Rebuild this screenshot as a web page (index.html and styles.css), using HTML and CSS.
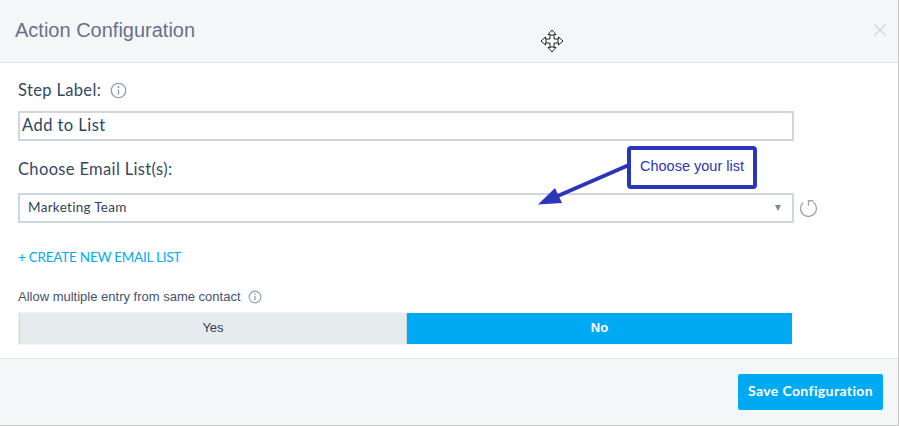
FILE: index.html
```html
<!DOCTYPE html>
<html lang="en">
<head>
<meta charset="utf-8">
<title>Action Configuration</title>
<link rel="stylesheet" href="styles.css">
</head>
<body>
<div class="modal">
  <header class="head">
    <h1 class="title">Action Configuration</h1>
    <svg class="close" width="14" height="14" viewBox="0 0 14 14"><path d="M1.500 1.500 12.500 12.500M12.500 1.500 1.500 12.500" stroke="#d3d7da" stroke-width="1.500" fill="none"/></svg>
  </header>
  <main class="body">
    <div class="label-row step-row">
      <span class="label">Step Label:</span>
      <svg class="info" width="17" height="17" viewBox="0 0 17 17"><circle cx="8.500" cy="8.500" r="7.200" fill="none" stroke="#8b9db0" stroke-width="1.300"/><path d="M8.500 7.500v5" stroke="#8b9db0" stroke-width="1.400"/><circle cx="8.500" cy="5" r="1" fill="#8b9db0"/></svg>
    </div>
    <div class="input">Add to List</div>
    <div class="label-row list-row"><span class="label">Choose Email List(s):</span></div>
    <div class="select-row">
      <div class="select">
        <span>Marketing Team</span>
        <span class="caret"></span>
      </div>
      <svg class="refresh" width="19" height="19" viewBox="0 0 19 19"><path d="M4 3.700A8 8 0 1 0 14.500 3.300" fill="none" stroke="#9aa7b3" stroke-width="1.400"/><path d="M14.500 1.800H9.500V6.800" fill="none" stroke="#9aa7b3" stroke-width="1.400"/></svg>
    </div>
    <a class="create" href="#">+ CREATE NEW EMAIL LIST</a>
    <div class="allow-row">
      <span class="allow">Allow multiple entry from same contact</span>
      <svg class="info" width="14" height="14" viewBox="0 0 14 14"><circle cx="7" cy="7" r="5.900" fill="none" stroke="#8b9db0" stroke-width="1.100"/><path d="M7 6v4.200" stroke="#8b9db0" stroke-width="1.200"/><circle cx="7" cy="4" r=".8" fill="#8b9db0"/></svg>
    </div>
    <div class="toggle">
      <div class="opt yes">Yes</div>
      <div class="opt no">No</div>
    </div>
  </main>
  <footer class="foot">
    <button class="save" type="button">Save Configuration</button>
  </footer>

  <svg class="move" width="24" height="24" viewBox="0 0 24 24"><path d="M12 1 16 5.500H14V10H18.500V8L23 12 18.500 16V14H14V18.500H16L12 23 8 18.500H10V14H5.500V16L1 12 5.500 8V10H10V5.500H8Z" fill="#fff" stroke="#222" stroke-width="1"/><path d="M10 6H14M10 18H14M6 10V14M18 10V14" fill="none" stroke="#222" stroke-width="1"/></svg>
  <svg class="arrow" width="92" height="46" viewBox="0 0 92 46"><path d="M91 5 15 38" stroke="#2b35b8" stroke-width="4" fill="none"/><path d="M0 44.500 17 28 24 43Z" fill="#2b35b8"/></svg>
  <div class="callout">Choose your list</div>
</div>
</body>
</html>
```
FILE: styles.css
```css
* { box-sizing: border-box; }
html, body { margin: 0; padding: 0; background: #fff; }
.modal {
  position: relative;
  width: 899px;
  height: 426px;
  display: flex;
  flex-direction: column;
  border-right: 1px solid #c9c9c9;
  border-bottom: 1px solid #c9c9c9;
  overflow: hidden;
}
.head {
  height: 63px;
  flex: none;
  background: #f4f7f8;
  border-bottom: 1px solid #e1e4e7;
  display: flex;
  align-items: center;
  justify-content: space-between;
  padding: 0 11px 2px 15px;
}
.title {
  margin: 0;
  font: 400 20px/24px "Liberation Sans", Arial, sans-serif;
  color: #6b6f8c;
}
.body {
  flex: 1;
  background: #fff;
  padding: 0 0 0 18px;
  display: flex;
  flex-direction: column;
}
.label-row { display: flex; align-items: center; gap: 9px; }
.step-row { height: 20px; margin-top: 17px; }
.list-row { height: 20px; margin-top: 18px; }
.label {
  font: 400 16.500px/20px Lato, sans-serif;
  letter-spacing: .35px;
  color: #34495e;
}
.input {
  width: 776px;
  height: 30px;
  margin-top: 11px;
  border: 2px solid #cdd7e0;
  padding: 0 2px;
  font: 400 16.500px/25px Lato, sans-serif;
  letter-spacing: .45px;
  color: #2c4661;
}
.select-row { display: flex; align-items: center; gap: 4px; margin-top: 14px; }
.select {
  width: 776px;
  height: 30px;
  border: 2px solid #cdd7e0;
  padding: 0 9px 3px 8px;
  display: flex;
  align-items: center;
  justify-content: space-between;
  font: 400 13.500px/24px Lato, sans-serif;
  letter-spacing: .3px;
  color: #2f445b;
}
.caret {
  width: 0;
  height: 0;
  margin: 2px 2px 0 0;
  border-left: 3.500px solid transparent;
  border-right: 3.500px solid transparent;
  border-top: 6px solid #808890;
}
.refresh { margin-left: 1px; }
.create {
  display: block;
  margin-top: 25px;
  font: 400 13.500px/18px Lato, sans-serif;
  letter-spacing: -.24px;
  color: #00acee;
  text-decoration: none;
}
.allow-row { display: flex; align-items: center; gap: 7px; height: 16px; margin-top: 23px; }
.allow { font: 400 13px/16px "Liberation Sans", Arial, sans-serif; color: #3f5369; }
.toggle {
  display: flex;
  width: 775px;
  height: 33px;
  margin-top: 7px;
  border: 1px solid #f3f5f6;
}
.opt {
  display: flex;
  align-items: center;
  justify-content: center;
  padding-bottom: 2px;
  font: 400 13px/16px "Liberation Sans", Arial, sans-serif;
}
.yes {
  width: 388px;
  background: #e6ebee;
  color: #2f445b;
  border-left: 1px solid #cfd4d8;
  border-right: 1px solid #cfd4d8;
}
.no {
  flex: 1;
  background: #00aaf2;
  color: #fff;
  font-weight: 700;
}
.foot {
  height: 67px;
  flex: none;
  background: #f4f7f8;
  border-top: 1px solid #e1e4e7;
  display: flex;
  justify-content: flex-end;
  padding: 15px 15px 0 0;
}
.save {
  width: 145px;
  height: 36px;
  border: 0;
  border-radius: 2px;
  background: #00aaf2;
  color: #fff;
  padding: 0 0 2px;
  font: 700 14px/20px Lato, sans-serif;
  letter-spacing: .38px;
}
.move { position: absolute; left: 540px; top: 29px; }
.arrow { position: absolute; left: 538px; top: 160px; }
.callout {
  position: absolute;
  left: 627px;
  top: 146px;
  width: 130px;
  height: 43px;
  border: 4px solid #2b35b8;
  border-radius: 4px;
  background: #fff;
  color: #2b35b8;
  font: 400 14.500px/32px "Liberation Sans", Arial, sans-serif;
  text-align: center;
}
```
